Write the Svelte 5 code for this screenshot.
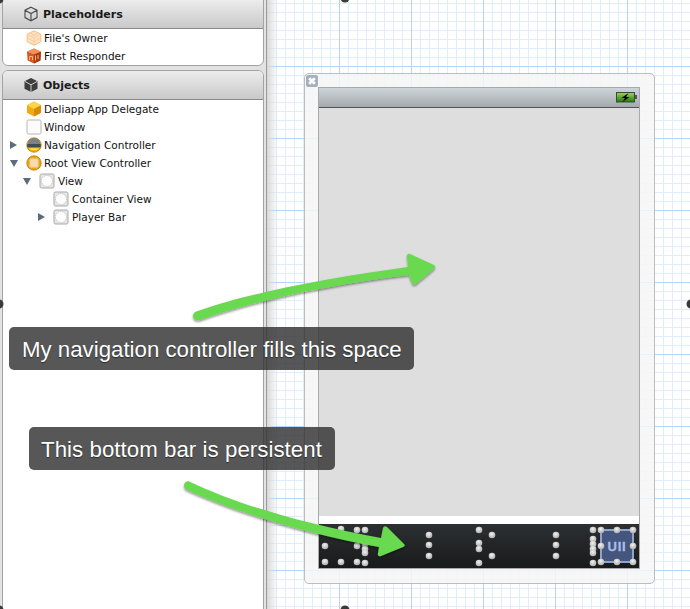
<script>
  const placeholders = [
    { icon: 'owner', label: "File's Owner" },
    { icon: 'responder', label: 'First Responder' }
  ];
  const objects = [
    { icon: 'delegate', label: 'Deliapp App Delegate', depth: 0 },
    { icon: 'window', label: 'Window', depth: 0 },
    { icon: 'nav', label: 'Navigation Controller', depth: 0, arrow: 'right' },
    { icon: 'root', label: 'Root View Controller', depth: 0, arrow: 'down' },
    { icon: 'view', label: 'View', depth: 1, arrow: 'down' },
    { icon: 'view', label: 'Container View', depth: 2 },
    { icon: 'view', label: 'Player Bar', depth: 2, arrow: 'right' }
  ];
  const dots = [
    [341,529],[357,530],[365,530],[325,546],[357,546],[365,544],[365,549],[365,553],
    [325,562],[341,562],[357,562],[365,563],
    [429,535],[429,545],[429,556],
    [479,530],[492,535],[479,543],[479,549],[492,556],[479,563],
    [556,535],[556,545],[556,556],
    [593,530],[593,539],[593,544],[593,549],[593,553],[593,563],
    [601,530],[617,530],[633,530],[601,546],[633,546],[601,562],[617,562],[633,562]
  ];
</script>

{#snippet icon(kind)}
  <svg class="ico" viewBox="0 0 16 16" width="16" height="16" aria-hidden="true">
    {#if kind === 'owner'}
      <path d="M8 .8 14.8 4.2V11.8L8 15.2 1.2 11.8V4.2Z" fill="#fde3c4" stroke="#f4bd85"/>
      <path d="M1.5 4.5 8 8 14.5 4.5M8 8V15M4.5 3 11 6.5M11.5 3 5 6.5M1.5 8 8 11.5 14.5 8" fill="none" stroke="#f6c793" stroke-width=".8"/>
    {:else if kind === 'responder'}
      <path d="M8 .6 15 3.8 14.4 12.4 8 15.6 1.6 12.4 1 3.8Z" fill="#d9561c"/>
      <path d="M1 3.8 8 .6 15 3.8 8 6.5Z" fill="#f0925a"/>
      <path d="M8 6.5V15.6L14.4 12.4 15 3.8Z" fill="#a93c10"/>
      <path d="M3.6 12V8.5H6.5V12M9.5 7.5V12.5M12 7V11" fill="none" stroke="#f7c49a" stroke-width=".9"/>
    {:else if kind === 'delegate'}
      <path d="M8 .6 15 4.2V11.8L8 15.4 1 11.8V4.2Z" fill="#f1ab12"/>
      <path d="M1 4.2 8 .6 15 4.2 8 8Z" fill="#fcd44e"/>
      <path d="M8 8V15.4L15 11.8V4.2Z" fill="#d88c06"/>
    {:else if kind === 'window'}
      <rect x="1" y="1" width="14" height="14" rx="1.5" fill="#fcfcfc" stroke="#b5b5b5"/>
    {:else if kind === 'nav'}
      <circle cx="8" cy="8" r="7.2" fill="#eab308" stroke="#b27c05" stroke-width=".8"/>
      <path d="M1.6 7.4a6.4 6.4 0 0 1 12.8 0Z" fill="#7b828a"/>
      <rect x="1.2" y="7" width="13.6" height="3.4" fill="#444a51"/>
      <path d="M3 11.5a6 4 0 0 0 10 0Z" fill="#fbe87b"/>
    {:else if kind === 'root'}
      <circle cx="8" cy="8" r="7.2" fill="#eaa70c" stroke="#b27c05" stroke-width=".8"/>
      <rect x="3.8" y="3.8" width="8.4" height="8.4" rx="1" fill="#fbdcb0" stroke="#e8c48c"/>
    {:else}
      <rect x="1" y="1" width="14" height="14" rx="1.5" fill="#e6e6e6" stroke="#a9a9a9"/>
      <circle cx="8" cy="8" r="5.5" fill="#fdfdfd" stroke="#b4b4b4" stroke-width=".8" stroke-dasharray="1 1"/>
    {/if}
  </svg>
{/snippet}

<div class="page">
  <aside class="side">
    <section class="panel first">
      <header class="head">
        <svg viewBox="0 0 16 16" width="16" height="16" aria-hidden="true"><path d="M8 1.2 14 4.2V11.6L8 14.8 2 11.6V4.2ZM2 4.2 8 7.6 14 4.2M8 7.6V14.8" fill="none" stroke="#4a4a4a" stroke-width="1.1"/></svg>
        <span>Placeholders</span>
      </header>
      <ul class="tree">
        {#each placeholders as p}
          <li class="row d0"><span class="tw"></span>{@render icon(p.icon)}<span>{p.label}</span></li>
        {/each}
      </ul>
    </section>
    <section class="panel second">
      <header class="head">
        <svg viewBox="0 0 16 16" width="16" height="16" aria-hidden="true"><path d="M8 1 14.5 4.2V11.8L8 15 1.5 11.8V4.2Z" fill="#3d3d3d"/><path d="M2 4.5 8 7.8 14 4.5M8 7.8V15" fill="none" stroke="#dcdcdc" stroke-width=".9"/></svg>
        <span>Objects</span>
      </header>
      <ul class="tree">
        {#each objects as o}
          <li class="row d{o.depth}">
            <span class="tw">
              {#if o.arrow === 'right'}<i class="tri right"></i>{:else if o.arrow === 'down'}<i class="tri down"></i>{/if}
            </span>
            {@render icon(o.icon)}<span>{o.label}</span>
          </li>
        {/each}
      </ul>
    </section>
  </aside>

  <main class="canvas">
    <div class="frame">
      <span class="close">
        <svg viewBox="0 0 12 12" width="12" height="12" aria-hidden="true"><path d="M3.2 3.2 8.8 8.8M8.8 3.2 3.2 8.8" stroke="#fff" stroke-width="2.8"/></svg>
      </span>
      <div class="screen">
        <div class="nav">
          <svg class="batt" viewBox="0 0 21 11" width="21" height="11" aria-hidden="true">
            <defs><linearGradient id="bg" x1="0" y1="0" x2="0" y2="1"><stop offset="0" stop-color="#a4d25a"/><stop offset="1" stop-color="#1d7a0a"/></linearGradient></defs>
            <rect x=".5" y=".5" width="18" height="9.5" fill="url(#bg)" stroke="#3c4a3c"/>
            <rect x="19" y="3" width="2" height="4" fill="#555"/>
            <path d="M12.5 1 5.5 6H9L6.5 10 13.5 5H10Z" fill="#000"/>
          </svg>
        </div>
        <div class="content"></div>
        <div class="gap"></div>
        <div class="bar"></div>
      </div>
    </div>
  </main>

  <svg class="marks" viewBox="0 0 690 609" width="690" height="609" aria-hidden="true">
    <defs>
      <filter id="sh" x="-10%" y="-30%" width="120%" height="160%"><feDropShadow dx="0" dy="1.5" stdDeviation="1" flood-color="#000" flood-opacity=".45"/></filter>
      <radialGradient id="dot" cx=".45" cy=".35" r=".7"><stop offset="0" stop-color="#f2f2f2"/><stop offset="1" stop-color="#a8a8a8"/></radialGradient>
    </defs>
    {#each [[345,-2],[345,610],[-1,304],[691,304],[-1,-1],[-1,610]] as d}
      <circle cx={d[0]} cy={d[1]} r="4.5" fill="#3a3a3a"/>
    {/each}
    <rect class="sel" x="601" y="530" width="32" height="32"/>
    <text class="uii" x="617" y="551" text-anchor="middle">UII</text>
    {#each dots as d}
      <circle cx={d[0]} cy={d[1]} r="3.3" fill="url(#dot)"/>
    {/each}
    <path filter="url(#sh)" fill="#69d94f" d="M195 312C250 292 330 278 408 267L407 256Q407 253 410 254L434 265Q436 267 434 269L416 284Q413 286 412 283L409 275C335 284 255 300 200 320Q193 321 193 316Q193 314 195 312Z"/>
    <path filter="url(#sh)" fill="#69d94f" d="M188 481C240 506 310 525 381 538L383 528Q384 525 387 527L404 544Q406 546 403 547L381 556Q377 557 378 553L379 547C310 534 235 513 185 489Q182 483 188 481Z"/>
  </svg>

  <div class="note one">My navigation controller fills this space</div>
  <div class="note two">This bottom bar is persistent</div>
</div>

<style>
  :global(body) { margin: 0; }
  .page {
    position: relative;
    display: flex;
    width: 690px;
    height: 609px;
    overflow: hidden;
    font-family: "DejaVu Sans", sans-serif;
  }
  .side {
    box-sizing: border-box;
    width: 267px;
    flex: none;
    display: flex;
    flex-direction: column;
    gap: 4px;
    padding: 0 2px 0 2px;
    background: #e2e2e2;
    border-right: 1px solid #9a9a9a;
  }
  .panel {
    background: #fff;
    border: 1px solid #a3a3a3;
    box-sizing: border-box;
  }
  .first {
    height: 67px;
    margin-top: -1px;
    border-radius: 0 0 6px 6px;
  }
  .second {
    flex: 1;
    margin-bottom: -1px;
    border-radius: 6px 6px 0 0;
  }
  .head {
    display: flex;
    align-items: center;
    gap: 4px;
    height: 29px;
    padding-left: 20px;
    box-sizing: border-box;
    background: linear-gradient(#ececec, #c9c9c9);
    border-bottom: 1px solid #8a8a8a;
    font-size: 11px;
    font-weight: 700;
    color: #1a1a1a;
  }
  .second .head { border-radius: 5px 5px 0 0; }
  .tree {
    list-style: none;
    margin: 0;
    padding: 0;
  }
  .row {
    display: flex;
    align-items: center;
    height: 18px;
    font-size: 10.5px;
    color: #111;
    white-space: nowrap;
  }
  .d0 { padding-left: 7px; }
  .d1 { padding-left: 20px; }
  .d2 { padding-left: 34px; }
  .tw {
    display: flex;
    align-items: center;
    width: 15px;
    flex: none;
  }
  .ico { margin: 0 2px 0 1px; flex: none; }
  .d1 .ico, .d2 .ico { margin-right: 3px; }
  .tri { display: block; width: 0; height: 0; }
  .tri.right {
    border-left: 7px solid #5d6b7d;
    border-top: 4.5px solid transparent;
    border-bottom: 4.5px solid transparent;
  }
  .tri.down {
    border-top: 7px solid #5d6b7d;
    border-left: 4.5px solid transparent;
    border-right: 4.5px solid transparent;
  }
  .d2 .tri.right { margin-left: 1px; }
  .canvas {
    position: relative;
    flex: 1;
    background-color: #fff;
    background-image:
      linear-gradient(to right, #d9d9d9, rgba(217,217,217,0) 11px),
      linear-gradient(to right, #b8d3f6 1px, transparent 1px),
      linear-gradient(to bottom, #b8d3f6 1px, transparent 1px),
      linear-gradient(to right, #e0edfc 1px, transparent 1px),
      linear-gradient(to bottom, #e0edfc 1px, transparent 1px);
    background-size: 100% 100%, 72px 72px, 72px 72px, 9px 9px, 9px 9px;
    background-position: 0 0, 0 66px, 0 66px, 0 3px, 0 3px;
  }
  .frame {
    position: absolute;
    left: 37px;
    top: 73px;
    box-sizing: border-box;
    width: 351px;
    height: 511px;
    padding: 13px;
    background: rgba(246,246,246,.85);
    border: 1px solid #bdbdbd;
    border-radius: 5px;
  }
  .close {
    position: absolute;
    left: 1px;
    top: 1px;
    width: 12px;
    height: 12px;
    border-radius: 2px;
    background: #a5b0bf;
    display: flex;
  }
  .screen {
    display: flex;
    flex-direction: column;
    height: 482px;
    width: 322px;
    box-sizing: border-box;
    border: 1px solid #a9a9a9;
  }
  .nav {
    box-sizing: border-box;
    height: 20px;
    flex: none;
    display: flex;
    justify-content: flex-end;
    align-items: center;
    padding-right: 2px;
    background: linear-gradient(#ced5d8, #a4a9ac);
    border-bottom: 1px solid #50555b;
  }
  .content { flex: 1; background: #dedede; }
  .gap { height: 8px; flex: none; background: #fff; }
  .bar {
    height: 44px;
    flex: none;
    background: linear-gradient(#2c3032, #191a1b);
  }
  .marks { position: absolute; left: 0; top: 0; pointer-events: none; }
  .sel { fill: #44567e; stroke: #8ea4cf; stroke-width: 2; }
  .uii {
    font-family: "Liberation Sans", sans-serif;
    font-size: 13px;
    font-weight: 700;
    letter-spacing: .8px;
    stroke: #a9bce6;
    stroke-width: .3;
    fill: #a9bce6;
  }
  .note {
    position: absolute;
    box-sizing: border-box;
    height: 43px;
    display: flex;
    align-items: center;
    padding: 2px 0 0 13px;
    border-radius: 5px;
    background: rgba(50,50,50,.82);
    color: #fff;
    font-family: "Liberation Sans", sans-serif;
    font-size: 22.25px;
    white-space: nowrap;
    text-shadow: 0 1px 1px rgba(0,0,0,.5);
  }
  .one { left: 9px; top: 327px; width: 405px; }
  .two { left: 29px; top: 427px; width: 306px; padding-left: 12px; letter-spacing: .05px; }
</style>
